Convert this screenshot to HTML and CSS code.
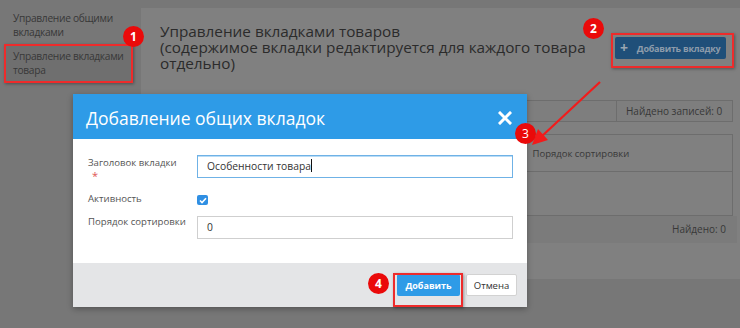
FILE: index.html
```html
<!DOCTYPE html>
<html lang="ru">
<head>
<meta charset="utf-8">
<title>Управление вкладками товаров</title>
<link rel="stylesheet" href="styles.css">
</head>
<body>
<div class="page">
  <aside class="sidebar">
    <a class="side-item">Управление общими вкладками</a>
    <a class="side-item active">Управление вкладками товара</a>
  </aside>
  <main class="content">
    <div class="head">
      <h1 class="title">Управление вкладками товаров<br>(содержимое вкладки редактируется для каждого товара отдельно)</h1>
      <button class="btn-add"><span class="plus">+</span>Добавить вкладку</button>
    </div>
    <div class="toolbar">
      <div class="toolbar-fill"></div>
      <div class="found">Найдено записей: 0</div>
    </div>
    <table class="grid">
      <colgroup>
        <col style="width:60px"><col style="width:190px"><col style="width:117px"><col style="width:205px">
      </colgroup>
      <thead>
        <tr><th>ID</th><th>Название</th><th>Активность</th><th>Порядок сортировки</th></tr>
      </thead>
      <tbody>
        <tr><td></td><td></td><td></td><td></td></tr>
      </tbody>
    </table>
    <div class="grid-foot">Найдено: 0</div>
  </main>
</div>

<div class="modal">
  <div class="modal-head">
    <span class="modal-title">Добавление общих вкладок</span>
    <svg class="close" width="14" height="14" viewBox="0 0 14 14"><path d="M2 2 L12 12 M12 2 L2 12" stroke="#fff" stroke-width="3" stroke-linecap="square"/></svg>
  </div>
  <div class="modal-body">
    <div class="form-row row-title">
      <label class="label">Заголовок вкладки<span class="req">*</span></label>
      <div class="input focused">Особенности товара<span class="caret"></span></div>
    </div>
    <div class="form-row row-check">
      <label class="label">Активность</label>
      <span class="checkbox"><svg width="8" height="7" viewBox="0 0 8 7"><path d="M1 3.5 L3 5.5 L7 1.2" stroke="#fff" stroke-width="1.6" fill="none"/></svg></span>
    </div>
    <div class="form-row row-sort">
      <label class="label">Порядок сортировки</label>
      <div class="input">0</div>
    </div>
  </div>
  <div class="modal-foot">
    <button class="btn btn-primary">Добавить</button>
    <button class="btn btn-default">Отмена</button>
  </div>
</div>

<div class="mark box1"></div>
<div class="mark box2"></div>
<div class="mark box4"></div>

<svg class="arrow" width="740" height="328" viewBox="0 0 740 328">
  <line x1="600" y1="82" x2="541" y2="137" stroke="#f21b1b" stroke-width="2.2"/>
  <polygon points="532,145 538,129 548,140" fill="#f21b1b"/>
</svg>

<span class="badge b1">1</span>
<span class="badge b2">2</span>
<span class="badge b3">3</span>
<span class="badge b4">4</span>
</body>
</html>
```

FILE: styles.css
```css
* { box-sizing: border-box; }
html, body { margin: 0; padding: 0; }
body {
  width: 740px;
  height: 328px;
  overflow: hidden;
  position: relative;
  background: #777777;
  font-family: "Open Sans", "Noto Sans", sans-serif;
  color: #3a3a3a;
}

/* underlying page (dimmed) */
.page { display: flex; height: 328px; }
.sidebar { width: 141px; flex: none; padding: 7px 9px 0 5px; }
.side-item {
  display: block;
  padding: 4px 4px 4px 8px;
  font-size: 10.2px;
  letter-spacing: -0.3px;
  line-height: 14px;
  color: #383838;
}
.side-item.active { background: #6f6f6f; margin-top: 2px; }

.content {
  flex: 1;
  margin-top: 8px;
  height: 271px;
  background: #808080;
  padding: 0 8px 0 19px;
}
.head { display: flex; justify-content: space-between; align-items: flex-start; padding-top: 15px; }
.title {
  margin: 0;
  width: 455px;
  font-size: 15.3px;
  line-height: 16px;
  font-weight: 400;
  color: #2b2b2b;
}
.btn-add {
  margin: 14px 7px 0 0;
  width: 111px;
  height: 22px;
  padding: 0 0 0 5px;
  border: none;
  border-radius: 2px;
  background: #1f4f79;
  color: #8d9cab;
  font-family: inherit;
  font-size: 9px;
  letter-spacing: -0.25px;
  font-weight: 700;
  white-space: nowrap;
  display: flex;
  align-items: center;
  gap: 9px;
}
.plus { font-size: 14px; font-weight: 700; color: #9aa6b2; line-height: 1; }

.toolbar {
  margin-top: 29px;
  height: 22px;
  display: flex;
  border: 1px solid #6d6d6d;
  background: #7e7e7e;
}
.toolbar-fill { flex: 1; }
.found {
  width: 116px;
  border-left: 1px solid #6d6d6d;
  font-size: 10px;
  line-height: 20px;
  padding-left: 9px;
  color: #383838;
}

.grid {
  margin-top: 12px;
  width: 100%;
  border-collapse: collapse;
  table-layout: fixed;
  border: 1px solid #6d6d6d;
}
.grid th {
  height: 37px;
  text-align: left;
  font-size: 9.5px;
  font-weight: 400;
  padding: 0 5px;
  color: #383838;
  border-bottom: 1px solid #6d6d6d;
}
.grid td { height: 44px; }
.grid-foot {
  height: 27px;
  margin-right: -4px;
  background: #7b7b7b;
  text-align: right;
  font-size: 10px;
  line-height: 27px;
  padding-right: 11px;
  color: #383838;
}

/* modal */
.modal {
  position: absolute;
  left: 73px;
  top: 94px;
  width: 454px;
  background: #fff;
  box-shadow: 0 2px 6px rgba(0,0,0,0.3);
}
.modal-head {
  height: 45px;
  background: #2e9be7;
  display: flex;
  align-items: center;
  justify-content: space-between;
  padding: 0 15px 0 13px;
}
.modal-title { color: #fff; font-size: 17.5px; font-weight: 400; padding-top: 2px; }
.close { margin-top: 3px; }
.modal-body { padding: 16px 14px 24px 15px; }
.form-row { display: grid; grid-template-columns: 109px 1fr; align-items: start; }
.label {
  font-size: 9.6px;
  line-height: 12px;
  color: #555;
}
.req { display: block; color: #e05555; padding-left: 4px; font-size: 11px; line-height: 13px; }
.row-title .label { padding-top: 2px; }
.row-check { margin-top: 11px; }
.row-sort { margin-top: 11px; }
.input {
  height: 23px;
  border: 1px solid #cfcfcf;
  padding: 0 9px;
  font-size: 10.3px;
  line-height: 21px;
  color: #333;
}
.input.focused { border-color: #6fb2e6; box-shadow: inset 0 1px 0 #b9dcf6; }
.caret { display: inline-block; width: 1px; height: 13px; background: #111; vertical-align: -2px; }
.checkbox {
  margin-top: 2px;
  width: 11px;
  height: 10px;
  border-radius: 2px;
  background: #2f8fe3;
  display: flex;
  align-items: center;
  justify-content: center;
}
.modal-foot {
  height: 44px;
  background: #e4e5e7;
  display: flex;
  justify-content: flex-end;
  align-items: center;
  gap: 6px;
  padding: 0 10px 0 0;
}
.btn {
  height: 22px;
  border-radius: 2px;
  font-family: inherit;
  font-size: 9.5px;
  padding: 0;
}
.btn-primary {
  width: 63px;
  border: none;
  background: #2e9be7;
  color: #fff;
  font-weight: 700;
  font-size: 9px;
}
.btn-default {
  width: 51px;
  border: 1px solid #d2d2d2;
  background: #fff;
  color: #333;
}

/* annotations */
.mark {
  position: absolute;
  border: 2px solid #ee2b2b;
  box-shadow: 1px 1px 3px rgba(0,0,0,0.35);
}
.box1 { left: 4px; top: 44px; width: 129px; height: 39px; }
.box2 { left: 611px; top: 33px; width: 123px; height: 35px; }
.box4 { left: 393px; top: 273px; width: 70px; height: 34px; }
.arrow { position: absolute; left: 0; top: 0; pointer-events: none; }
.badge {
  position: absolute;
  width: 21px;
  height: 21px;
  border-radius: 50%;
  background: #ea0a0a;
  color: #fff;
  font-size: 12px;
  font-weight: 700;
  line-height: 21px;
  text-align: center;
}
.b1 { left: 123px; top: 26px; }
.b2 { left: 583px; top: 18px; }
.b3 { left: 515px; top: 123px; font-weight: 400; }
.b4 { left: 368px; top: 273px; }
```
